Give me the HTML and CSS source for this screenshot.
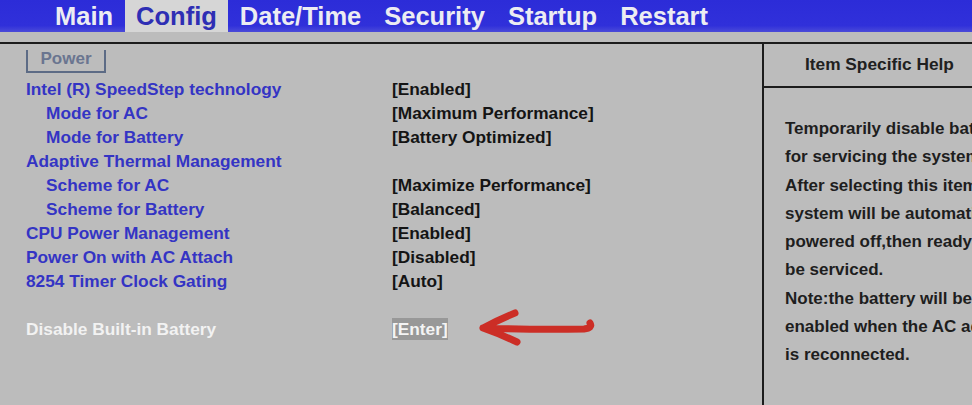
FILE: index.html
```html
<!DOCTYPE html>
<html>
<head>
<meta charset="utf-8">
<link rel="stylesheet" href="styles.css">
</head>
<body>
<div class="menubar">
  <span class="menu-item">Main</span>
  <span class="menu-item active">Config</span>
  <span class="menu-item">Date/Time</span>
  <span class="menu-item">Security</span>
  <span class="menu-item">Startup</span>
  <span class="menu-item">Restart</span>
</div>
<div class="spacer"></div>
<div class="main">
  <div class="left">
    <div class="tab"><span>Power</span></div>
    <div class="rows">
      <div class="row"><span class="label">Intel (R) SpeedStep technology</span><span class="value">[Enabled]</span></div>
      <div class="row"><span class="label sub">Mode for AC</span><span class="value">[Maximum Performance]</span></div>
      <div class="row"><span class="label sub">Mode for Battery</span><span class="value">[Battery Optimized]</span></div>
      <div class="row"><span class="label">Adaptive Thermal Management</span><span class="value"></span></div>
      <div class="row"><span class="label sub">Scheme for AC</span><span class="value">[Maximize Performance]</span></div>
      <div class="row"><span class="label sub">Scheme for Battery</span><span class="value">[Balanced]</span></div>
      <div class="row"><span class="label">CPU Power Management</span><span class="value">[Enabled]</span></div>
      <div class="row"><span class="label">Power On with AC Attach</span><span class="value">[Disabled]</span></div>
      <div class="row"><span class="label">8254 Timer Clock Gating</span><span class="value">[Auto]</span></div>
      <div class="row"></div>
      <div class="row selected"><span class="label">Disable Built-in Battery</span><span class="value"><span class="enter">[Enter]</span></span></div>
    </div>
    <svg class="arrow" width="124" height="44" viewBox="0 0 124 44">
      <path d="M39 7 Q22 14 7 22 Q24 28 41 36 M7 22 Q60 24 108 23 Q117 22 114 17" fill="none" stroke="#cc2e26" stroke-width="7" stroke-linecap="round" stroke-linejoin="round"/>
    </svg>
  </div>
  <div class="right">
    <div class="help-head">Item Specific Help</div>
    <p class="help-text">Temporarily disable battery<br>for servicing the system.<br>After selecting this item,<br>system will be automatically<br>powered off,then ready to<br>be serviced.<br>Note:the battery will be<br>enabled when the AC adapter<br>is reconnected.</p>
  </div>
</div>
</body>
</html>
```

FILE: styles.css
```css
html, body {
  margin: 0;
  padding: 0;
  height: 100%;
  overflow: hidden;
}
body {
  background: #bcbcbc;
  font-family: "Liberation Sans", Arial, sans-serif;
  font-weight: bold;
}
.menubar {
  height: 32px;
  display: flex;
  padding-left: 43.5px;
  background: linear-gradient(to bottom, #2c2cd8 0%, #3030da 80%, #4a4ad8 100%);
}
.menu-item {
  padding: 0 11.5px;
  line-height: 32px;
  font-size: 25.5px;
  color: #ececf2;
  white-space: nowrap;
}
.menu-item.active {
  background: #d6d6d6;
  color: #2e2eb4;
}
.spacer {
  height: 10px;
}
.main {
  display: flex;
  border-top: 2px solid #1c1c1c;
  height: calc(100% - 44px);
}
.left {
  position: relative;
  width: 764px;
  flex: none;
  border-right: 2px solid #1c1c1c;
  padding-left: 26px;
  box-sizing: border-box;
}
.tab {
  margin-top: 6px;
  width: 80px;
  height: 23px;
  box-sizing: border-box;
  border: 2px solid #5c6b85;
  border-top: none;
  text-align: center;
  font-size: 17px;
  line-height: 17px;
  color: #6a7590;
}
.rows {
  margin-top: 4px;
}
.row {
  display: grid;
  grid-template-columns: 366px auto;
  height: 24px;
  line-height: 24px;
  font-size: 17.3px;
  white-space: nowrap;
}
.label {
  color: #3434c4;
}
.label.sub {
  padding-left: 20px;
}
.value {
  color: #141414;
}
.selected .label {
  color: #f2f2f2;
}
.enter {
  display: inline-block;
  background: #989898;
  color: #f4f4f4;
  line-height: 22px;
}
.arrow {
  position: absolute;
  left: 476px;
  top: 262px;
}
.right {
  flex: 1;
  min-width: 0;
  overflow: hidden;
}
.help-head {
  height: 42px;
  line-height: 40px;
  border-bottom: 2px solid #1c1c1c;
  padding-left: 41px;
  font-size: 17.3px;
  color: #202020;
  white-space: nowrap;
}
.help-text {
  margin: 0;
  padding: 27px 0 0 21px;
  font-size: 17px;
  line-height: 28.3px;
  color: #1e1e1e;
  white-space: nowrap;
}
```
